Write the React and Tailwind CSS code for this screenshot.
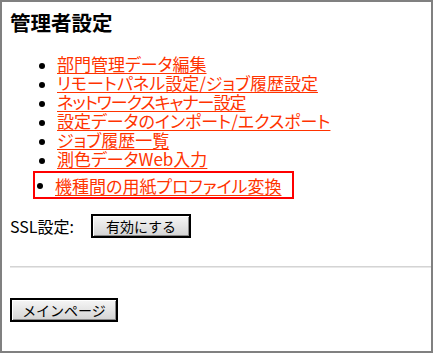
import React from "react";

const menuItems = [
  { text: "部門管理データ編集" },
  { text: "リモートパネル設定/ジョブ履歴設定" },
  { text: "ネットワークスキャナー設定", tight: true },
  { text: "設定データのインポート/エクスポート" },
  { text: "ジョブ履歴一覧" },
  { text: "測色データWeb入力" },
];

function ClassicButton({ label, width }) {
  return (
    <button
      type="button"
      className={`${width} h-[24px] border-2 border-black bg-gradient-to-b from-[#f6f6f6] to-[#d4d4d4] shadow-[inset_1px_1px_0_#ffffff,inset_-1px_-1px_0_#8a8a8a] text-[14px] leading-none text-black`}
    >
      {label}
    </button>
  );
}

function MenuLink({ text, tight }) {
  return (
    <li className="flex items-start">
      <span className="mt-[9px] ml-[4px] w-[6px] h-[6px] rounded-full bg-black shrink-0" />
      <a
        href="#"
        className={`ml-[12px] text-[#ff3300] underline underline-offset-[2px] ${tight ? "tracking-[-1px]" : ""}`}
      >
        {text}
      </a>
    </li>
  );
}

export default function App() {
  return (
    <div
      className="w-[433px] h-[353px] border-2 border-[#808080] bg-white overflow-hidden"
      style={{ fontFamily: '"Noto Sans CJK JP", "Noto Sans", sans-serif' }}
    >
      <div className="pt-[10px] pl-[8px]">
        <h3 className="text-[20.5px] leading-[20px] font-bold text-black">管理者設定</h3>

        <ul className="mt-[22px] pl-[25px] text-[17px] leading-[19px] [font-feature-settings:'palt']">
          {menuItems.map((item) => (
            <MenuLink key={item.text} text={item.text} tight={item.tight} />
          ))}
          <li className="mt-[3px] -ml-[2px] w-fit flex items-start border-2 border-[#ff0000] pt-[3px] pb-[2px] pr-[11px]">
            <span className="mt-[7px] ml-[2px] w-[6px] h-[6px] rounded-full bg-black shrink-0" />
            <a href="#" className="ml-[12px] text-[#ff3300] underline underline-offset-[2px]">
              機種間の用紙プロファイル変換
            </a>
          </li>
        </ul>

        <div className="mt-[15px] flex items-center h-[24px]">
          <span className="w-[81px] text-[16px] text-black">SSL設定:</span>
          <ClassicButton label="有効にする" width="w-[100px]" />
        </div>

        <div className="mt-[28px] h-[2px] bg-[#d4d4d4] border-b border-[#e8e8e8]" />

        <div className="mt-[29px]">
          <ClassicButton label="メインページ" width="w-[108px]" />
        </div>
      </div>
    </div>
  );
}
